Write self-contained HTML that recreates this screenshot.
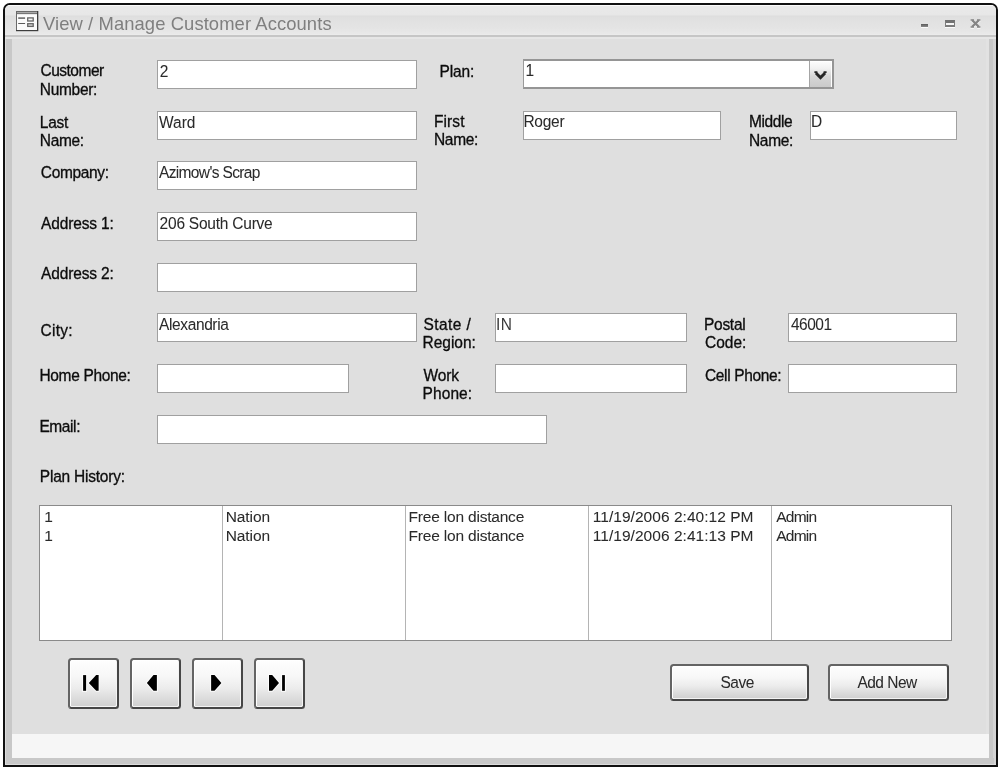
<!DOCTYPE html>
<html><head><meta charset="utf-8">
<style>
*{margin:0;padding:0;box-sizing:border-box}
html,body{width:1000px;height:770px;overflow:hidden;background:#fff;font-family:"Liberation Sans",sans-serif}
body{filter:grayscale(1)}
#win{position:absolute;left:3px;top:3px;width:995px;height:764px;border:2px solid #101010;border-radius:7px 7px 0 0;background:#dfdfdf;overflow:hidden}
.abs{position:absolute}
.t,.tb,.tn{position:absolute;font-size:15.5px;line-height:18.4px;white-space:nowrap;transform:scaleY(1.07);transform-origin:0 14.57px}
.t{color:#0c0c0c;-webkit-text-stroke:0.3px #0c0c0c}
.tb{color:#2a2a2a;-webkit-text-stroke:0.05px #2a2a2a}
.tn{color:#1c1c1c;-webkit-text-stroke:0.12px #1c1c1c}
.box{position:absolute;background:#fff;border:1px solid #a0a0a0}
.btn{position:absolute;border:2px solid #646464;border-right-color:#464646;border-bottom-color:#464646;border-radius:3.5px;box-shadow:inset 1px 1px 0 #fff,inset -1px -1px 0 #f4f4f4;background:linear-gradient(#fefefe,#f7f7f7 35%,#ececec 60%,#d6d6d6 90%,#d0d0d0)}
</style></head><body>
<div id="win">
 <div class="abs" style="left:0;top:0;width:991px;height:1px;background:#fafafa"></div>
 <div class="abs" style="left:0;top:1px;width:991px;height:29px;background:linear-gradient(#e9e9e9 0px,#e7e7e7 9px,#dddddd 10px,#e0e0e0 12px,#e4e4e4 22px,#e9e9e9 28px,#ededed 29px)"></div>
 <div class="abs" style="left:0;top:30px;width:991px;height:2px;background:#c6c6c6"></div>
 <div class="abs" style="left:0;top:32px;width:991px;height:2px;background:#e6e6e6"></div>
 <div class="abs" style="left:0;top:34px;width:1px;height:730px;background:#dcdcdc"></div>
 <div class="abs" style="left:1px;top:34px;width:6px;height:730px;background:#c8c8c8"></div>
 <div class="abs" style="left:981px;top:34px;width:3px;height:695px;background:#e2e2e2"></div>
 <div class="abs" style="left:984px;top:34px;width:4px;height:730px;background:#c8c8c8"></div>
 <div class="abs" style="left:988px;top:34px;width:3px;height:730px;background:#d4d4d4"></div>
 <div class="abs" style="left:7px;top:729px;width:977px;height:24px;background:#f6f6f6"></div>
 <div class="abs" style="left:1px;top:753px;width:988px;height:6px;background:#c8c8c8"></div>
 <div class="abs" style="left:1px;top:759px;width:990px;height:1px;background:#dcdcdc"></div>
</div>
<div class="t" style="left:43px;top:12px;font-size:18.4px;line-height:24px;letter-spacing:0.09px;-webkit-text-stroke:0;color:#7f7f7f;transform:none">View / Manage Customer Accounts</div>
<div class="t" style="left:40.50px;top:62.23px;letter-spacing:-0.500px;">Customer</div>
<div class="t" style="left:39.80px;top:80.73px;letter-spacing:-0.300px;">Number:</div>
<div class="t" style="left:39.80px;top:113.53px;letter-spacing:-0.267px;">Last</div>
<div class="t" style="left:39.80px;top:131.73px;letter-spacing:-0.325px;">Name:</div>
<div class="t" style="left:40.80px;top:164.03px;letter-spacing:-0.343px;">Company:</div>
<div class="t" style="left:41.00px;top:214.83px;letter-spacing:-0.133px;">Address 1:</div>
<div class="t" style="left:41.00px;top:265.43px;letter-spacing:-0.133px;">Address 2:</div>
<div class="t" style="left:40.40px;top:322.03px;letter-spacing:0.300px;">City:</div>
<div class="t" style="left:39.40px;top:367.23px;letter-spacing:-0.330px;">Home Phone:</div>
<div class="t" style="left:39.40px;top:418.23px;letter-spacing:-0.400px;">Email:</div>
<div class="t" style="left:39.80px;top:468.03px;letter-spacing:-0.217px;">Plan History:</div>
<div class="t" style="left:439.40px;top:62.63px;letter-spacing:-0.100px;">Plan:</div>
<div class="t" style="left:434.00px;top:113.23px;letter-spacing:0.100px;">First</div>
<div class="t" style="left:434.00px;top:131.23px;letter-spacing:-0.325px;">Name:</div>
<div class="t" style="left:749.00px;top:113.23px;letter-spacing:-0.400px;">Middle</div>
<div class="t" style="left:749.00px;top:131.73px;letter-spacing:-0.325px;">Name:</div>
<div class="t" style="left:423.60px;top:316.23px;letter-spacing:0.400px;">State /</div>
<div class="t" style="left:422.60px;top:334.23px;letter-spacing:-0.033px;">Region:</div>
<div class="t" style="left:423.60px;top:366.83px;letter-spacing:-0.200px;">Work</div>
<div class="t" style="left:422.60px;top:384.83px;letter-spacing:0.080px;">Phone:</div>
<div class="t" style="left:704.00px;top:316.03px;letter-spacing:-0.280px;">Postal</div>
<div class="t" style="left:705.00px;top:334.23px;letter-spacing:0.000px;">Code:</div>
<div class="t" style="left:705.00px;top:366.83px;letter-spacing:-0.360px;">Cell Phone:</div>
<div class="box" style="left:157px;top:60px;width:260px;height:29px"></div>
<div class="box" style="left:157px;top:111px;width:260px;height:29px"></div>
<div class="box" style="left:157px;top:161px;width:260px;height:29px"></div>
<div class="box" style="left:157px;top:212px;width:260px;height:29px"></div>
<div class="box" style="left:157px;top:263px;width:260px;height:29px"></div>
<div class="box" style="left:157px;top:313px;width:260px;height:29px"></div>
<div class="box" style="left:157px;top:364px;width:192px;height:29px"></div>
<div class="box" style="left:157px;top:415px;width:390px;height:29px"></div>
<div class="box" style="left:523px;top:111px;width:198px;height:29px"></div>
<div class="box" style="left:810px;top:111px;width:147px;height:29px"></div>
<div class="box" style="left:495px;top:313px;width:192px;height:29px"></div>
<div class="box" style="left:495px;top:364px;width:192px;height:29px"></div>
<div class="box" style="left:788px;top:313px;width:169px;height:29px"></div>
<div class="box" style="left:788px;top:364px;width:169px;height:29px"></div>
<div class="tb" style="left:159.75px;top:62.63px;letter-spacing:0.000px;">2</div>
<div class="tb" style="left:159.00px;top:113.63px;letter-spacing:0.000px;">Ward</div>
<div class="tb" style="left:159.00px;top:164.23px;letter-spacing:-0.646px;">Azimow's Scrap</div>
<div class="tb" style="left:159.60px;top:214.83px;letter-spacing:-0.229px;">206 South Curve</div>
<div class="tb" style="left:159.00px;top:316.13px;letter-spacing:-0.378px;">Alexandria</div>
<div class="tb" style="left:523.40px;top:113.43px;letter-spacing:-0.250px;">Roger</div>
<div class="tb" style="left:811.00px;top:113.43px;letter-spacing:0.000px;">D</div>
<div class="tb" style="left:791.00px;top:315.93px;letter-spacing:-0.500px;">46001</div>
<div class="tb" style="left:496.00px;top:316.23px;letter-spacing:0.400px;color:#3a3a3a;-webkit-text-stroke:0">IN</div>
<div class="abs" style="left:523px;top:59px;width:311px;height:30px;background:#fff;border:2px solid #959595;border-left:1px solid #9a9a9a"></div>
<div class="abs" style="left:809px;top:61px;width:23px;height:26px;border-left:1px solid #a4a4a4;background:linear-gradient(#fdfdfd,#f0f0f0 30%,#d6d6d6 60%,#cacaca);box-shadow:inset -1px 0 0 #fff,inset 0 1px 0 #fff"></div>
<svg class="abs" style="left:810px;top:62.6px" width="22" height="24" viewBox="0 0 22 24"><path d="M5.9 9.9 L10.5 14.6 L15.1 9.9" fill="none" stroke="#262626" stroke-width="2.9"/><path d="M4.4 9.1 H7.4 M13.6 9.1 H16.6" stroke="#262626" stroke-width="1.6"/></svg>
<div class="tb" style="left:525.50px;top:62.43px;letter-spacing:0.000px;">1</div>
<div class="abs" style="left:39px;top:505px;width:913px;height:136px;background:#fff;border:1px solid #8a8a8a"></div>
<div class="abs" style="left:222px;top:506px;width:1px;height:134px;background:#b4b4b4"></div>
<div class="abs" style="left:405px;top:506px;width:1px;height:134px;background:#b4b4b4"></div>
<div class="abs" style="left:588px;top:506px;width:1px;height:134px;background:#b4b4b4"></div>
<div class="abs" style="left:771px;top:506px;width:1px;height:134px;background:#b4b4b4"></div>
<div class="tb" style="left:44.30px;top:507.83px;letter-spacing:0.000px;transform:scaleY(1.0)">1</div>
<div class="tb" style="left:225.75px;top:507.83px;letter-spacing:-0.100px;transform:scaleY(1.0)">Nation</div>
<div class="tb" style="left:408.60px;top:507.83px;letter-spacing:-0.200px;transform:scaleY(1.0)">Free lon distance</div>
<div class="tb" style="left:592.75px;top:507.83px;letter-spacing:0.038px;transform:scaleY(1.0)">11/19/2006 2:40:12 PM</div>
<div class="tb" style="left:776.25px;top:507.83px;letter-spacing:-0.750px;transform:scaleY(1.0)">Admin</div>
<div class="tb" style="left:44.30px;top:527.13px;letter-spacing:0.000px;transform:scaleY(1.0)">1</div>
<div class="tb" style="left:225.75px;top:527.13px;letter-spacing:-0.100px;transform:scaleY(1.0)">Nation</div>
<div class="tb" style="left:408.60px;top:527.13px;letter-spacing:-0.200px;transform:scaleY(1.0)">Free lon distance</div>
<div class="tb" style="left:592.75px;top:527.13px;letter-spacing:0.038px;transform:scaleY(1.0)">11/19/2006 2:41:13 PM</div>
<div class="tb" style="left:776.25px;top:527.13px;letter-spacing:-0.750px;transform:scaleY(1.0)">Admin</div>
<div class="btn" style="left:68px;top:658px;width:50.5px;height:50.5px"><svg class="abs" style="left:-2px;top:-2px" width="50" height="50" viewBox="0 0 50 50"><g fill="none" stroke="#fff" stroke-width="2" opacity="0.85"><rect x="15.1" y="17.1" width="3" height="15.7"/><path d="M20.8 25 L28.2 17.1 L30.6 17.1 L30.6 32.8 L28.2 32.8 Z"/></g><g fill="#000"><rect x="15.1" y="17.1" width="3" height="15.7"/><path d="M20.8 25 L28.2 17.1 L30.6 17.1 L30.6 32.8 L28.2 32.8 Z"/></g></svg></div>
<div class="btn" style="left:130px;top:658px;width:50.5px;height:50.5px"><svg class="abs" style="left:-2px;top:-2px" width="50" height="50" viewBox="0 0 50 50"><g fill="none" stroke="#fff" stroke-width="2" opacity="0.85"><path d="M16.9 25 L23.5 17.1 L26.9 17.1 L26.9 32.8 L23.5 32.8 Z"/></g><g fill="#000"><path d="M16.9 25 L23.5 17.1 L26.9 17.1 L26.9 32.8 L23.5 32.8 Z"/></g></svg></div>
<div class="btn" style="left:192px;top:658px;width:50.5px;height:50.5px"><svg class="abs" style="left:-2px;top:-2px" width="50" height="50" viewBox="0 0 50 50"><g fill="none" stroke="#fff" stroke-width="2" opacity="0.85"><path d="M29.4 25 L22.5 17.1 L19.1 17.1 L19.1 32.8 L22.5 32.8 Z"/></g><g fill="#000"><path d="M29.4 25 L22.5 17.1 L19.1 17.1 L19.1 32.8 L22.5 32.8 Z"/></g></svg></div>
<div class="btn" style="left:254px;top:658px;width:50.5px;height:50.5px"><svg class="abs" style="left:-2px;top:-2px" width="50" height="50" viewBox="0 0 50 50"><g fill="none" stroke="#fff" stroke-width="2" opacity="0.85"><path d="M25 25 L18.2 17.1 L15 17.1 L15 32.8 L18.2 32.8 Z"/><rect x="28.1" y="17.1" width="2.8" height="15.7"/></g><g fill="#000"><path d="M25 25 L18.2 17.1 L15 17.1 L15 32.8 L18.2 32.8 Z"/><rect x="28.1" y="17.1" width="2.8" height="15.7"/></g></svg></div>
<div class="btn" style="left:670px;top:664px;width:139px;height:37px"></div>
<div class="tb" style="left:720.50px;top:674.03px;letter-spacing:-0.500px;">Save</div>
<div class="btn" style="left:828px;top:664px;width:121px;height:37px"></div>
<div class="tb" style="left:857.40px;top:674.03px;letter-spacing:-0.500px;">Add New</div>
<svg class="abs" style="left:16px;top:10.8px" width="23" height="21" viewBox="0 0 23 21">
<rect x="0" y="0" width="22.3" height="20.2" fill="#3e3e3e"/>
<rect x="0" y="0" width="21" height="19" fill="#6a6a6a"/>
<rect x="1" y="1" width="20" height="1.2" fill="#a8a8a8"/>
<rect x="1" y="3.1" width="20" height="15.9" fill="#fbfbfb"/>
<rect x="1" y="3.1" width="20" height="0.9" fill="#e8e8e8"/>
<rect x="2.2" y="6.3" width="6.9" height="1.6" fill="#6a6a6a"/>
<rect x="2.2" y="12.0" width="6.9" height="1.0" fill="#5a5a5a"/>
<rect x="11.7" y="6.9" width="5.5" height="3.1" fill="#f4f4f4" stroke="#666" stroke-width="1.3"/>
<rect x="11.7" y="12.7" width="5.5" height="2.7" fill="#d8d8d8" stroke="#666" stroke-width="1.3"/>
</svg>
<div class="abs" style="left:921px;top:24px;width:7px;height:3px;background:linear-gradient(#5a5a5a,#8a8a8a);box-shadow:0 1px 0 #fafafa"></div>
<div class="abs" style="left:945px;top:20px;width:10px;height:7px;border:1px solid #7c7c7c;border-top:3px solid #727272;border-bottom:2px solid #7c7c7c;background:#f6f6f6;box-shadow:0 1px 0 #fafafa"></div>
<svg class="abs" style="left:970px;top:19px" width="11" height="10" viewBox="0 0 11 10"><g transform="translate(0,1)" stroke="#fafafa"><path d="M2.2 1.2 L8.8 7.8 M8.8 1.2 L2.2 7.8" stroke-width="2.3"/><path d="M0.6 1 H4 M7 1 H10.4 M0.6 8 H4 M7 8 H10.4" stroke-width="1.7"/></g><g stroke="#858585"><path d="M2.2 1.2 L8.8 7.8 M8.8 1.2 L2.2 7.8" stroke-width="2.3"/><path d="M0.6 1 H4 M7 1 H10.4 M0.6 8 H4 M7 8 H10.4" stroke-width="1.7"/></g></svg>

</body></html>
